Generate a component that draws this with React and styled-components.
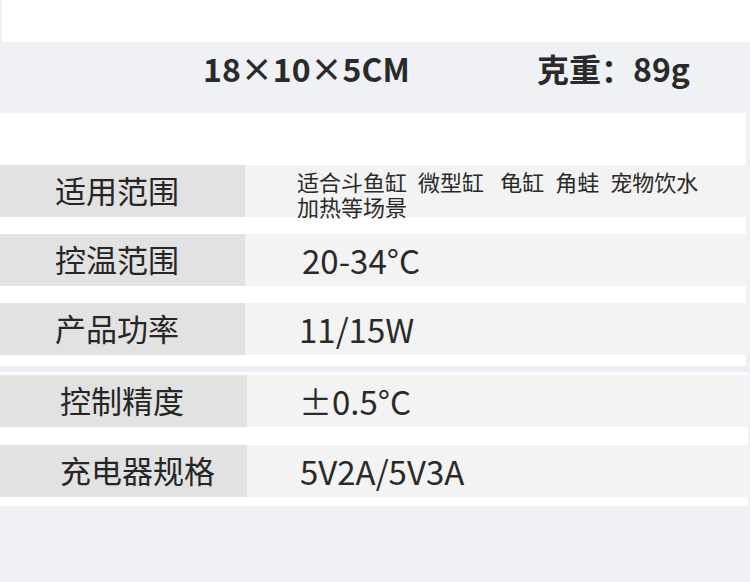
import React from 'react'
import styled, { createGlobalStyle } from 'styled-components'

const GlobalStyle = createGlobalStyle`
    html, body {
        margin: 0;
        padding: 0;
        background: #f0f1f5;
    }
    body {
        font-family: "Noto Sans CJK SC", "Noto Sans", sans-serif;
        color: #222;
    }
`

const Page = styled.div`
    width: 750px;
    height: 582px;
    background: #f0f1f5;
    overflow: hidden;
`

const TopBlank = styled.div`
    height: 42px;
    margin-left: 2px;
    background: #fff;
`

const SizeBand = styled.div`
    height: 71px;
    box-sizing: border-box;
    display: flex;
    align-items: center;
    padding: 0 0 19px 203px;
    font-size: 32px;
    line-height: 1;
    font-weight: 700;
    color: #2a2a2a;
`

const SizeText = styled.span`
    width: 334px;
`

const Panel = styled.div`
    width: ${props => props.width}px;
    background: #fff;
    padding: ${props => props.pad};
    display: flex;
    flex-direction: column;
    gap: ${props => props.gap}px;
`

const Strip = styled.div`
    height: 6px;
    width: 748px;
    background: #eceef6;
`

const Row = styled.div`
    display: grid;
    grid-template-columns: ${props => props.labelWidth}px 1fr;
    grid-template-rows: 52px;
    height: 52px;
`

const Label = styled.div`
    background: #e2e2e2;
    display: flex;
    align-items: center;
    padding: 0 0 4px ${props => props.indent}px;
    font-size: 31px;
    line-height: 1;
    color: #262626;
`

const Value = styled.div`
    background: #f3f3f3;
    display: flex;
    align-items: center;
    padding-left: ${props => props.indent}px;
    font-size: 33px;
    color: #2a2a2a;
    overflow: hidden;
`

const SmallValue = styled.div`
    background: #f3f3f3;
    padding: 4px 0 0 52px;
    font-size: 22px;
    line-height: 25px;
    color: #2a2a2a;
    word-spacing: 6px;

    span {
        display: block;
        width: 412px;
    }
`

const topRows = [
    { label: '控温范围', value: '20-34°C', indent: 57 },
    { label: '产品功率', value: '11/15W', indent: 54 },
]

const bottomRows = [
    { label: '控制精度', value: '±0.5°C', indent: 52 },
    { label: '充电器规格', value: '5V2A/5V3A', indent: 53 },
]

export default function App() {
    return (
        <Page>
            <GlobalStyle />
            <TopBlank />
            <SizeBand>
                <SizeText>18×10×5CM</SizeText>
                <span>克重：89g</span>
            </SizeBand>

            <Panel width={746} pad="52px 0 11px" gap={17}>
                <Row labelWidth={245}>
                    <Label indent={55}>适用范围</Label>
                    <SmallValue>
                        <span>适合斗鱼缸 微型缸{'\u2005'} 龟缸 角蛙 宠物饮水加热等场景</span>
                    </SmallValue>
                </Row>
                {topRows.map(r => (
                    <Row key={r.label} labelWidth={245}>
                        <Label indent={55}>{r.label}</Label>
                        <Value indent={r.indent}>{r.value}</Value>
                    </Row>
                ))}
            </Panel>
            <Strip />
            <Panel width={748} pad="3px 0 9px" gap={18}>
                {bottomRows.map(r => (
                    <Row key={r.label} labelWidth={247}>
                        <Label indent={60}>{r.label}</Label>
                        <Value indent={r.indent}>{r.value}</Value>
                    </Row>
                ))}
            </Panel>
        </Page>
    )
}
